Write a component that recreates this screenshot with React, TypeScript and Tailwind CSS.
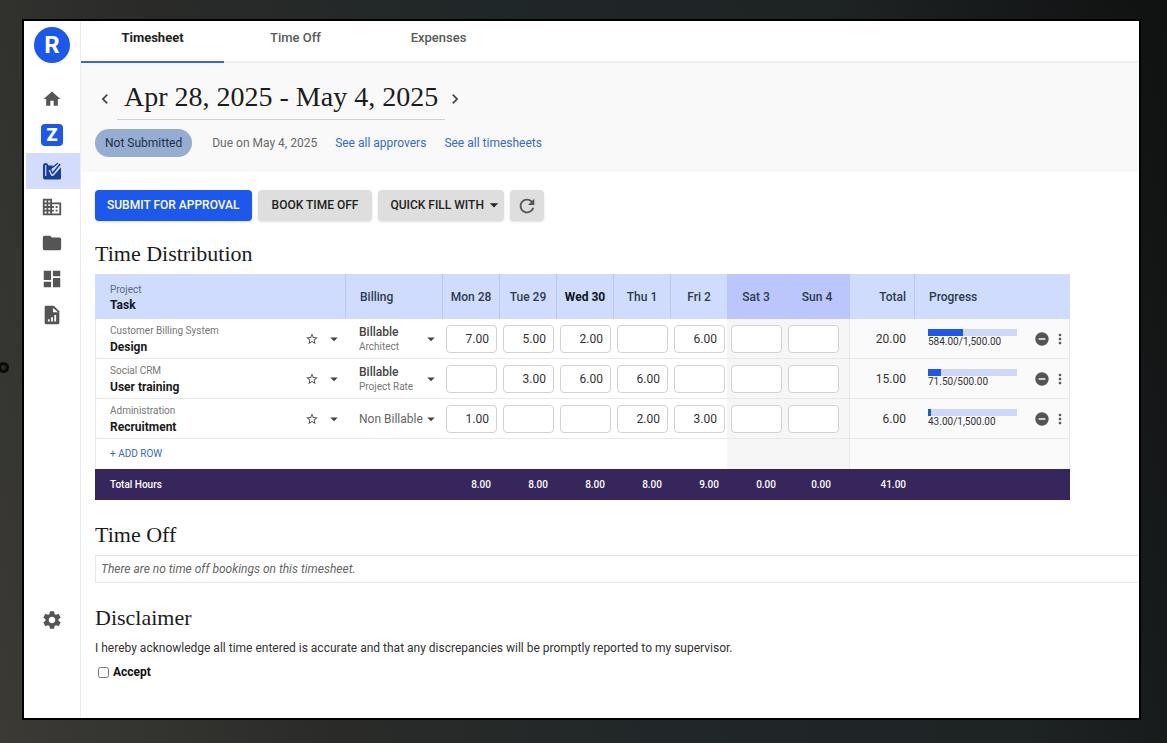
import { useState } from 'react';
import {
  MdArrowDropDown,
  MdChevronLeft,
  MdChevronRight,
  MdDashboard,
  MdDomain,
  MdFolder,
  MdHome,
  MdMoreVert,
  MdRefresh,
  MdRemoveCircle,
  MdSettings,
  MdStarBorder,
} from 'react-icons/md';

interface Day {
  label: string;
  weekend?: boolean;
  today?: boolean;
  total: string;
}

interface TimesheetRow {
  project: string;
  task: string;
  billing: string;
  rate?: string;
  hours: string[];
  total: string;
  used: number;
  budget: number;
}

const days: Day[] = [
  { label: 'Mon 28', total: '8.00' },
  { label: 'Tue 29', total: '8.00' },
  { label: 'Wed 30', total: '8.00', today: true },
  { label: 'Thu 1', total: '8.00' },
  { label: 'Fri 2', total: '9.00' },
  { label: 'Sat 3', total: '0.00', weekend: true },
  { label: 'Sun 4', total: '0.00', weekend: true },
];

const initialRows: TimesheetRow[] = [
  {
    project: 'Customer Billing System',
    task: 'Design',
    billing: 'Billable',
    rate: 'Architect',
    hours: ['7.00', '5.00', '2.00', '', '6.00', '', ''],
    total: '20.00',
    used: 584,
    budget: 1500,
  },
  {
    project: 'Social CRM',
    task: 'User training',
    billing: 'Billable',
    rate: 'Project Rate',
    hours: ['', '3.00', '6.00', '6.00', '', '', ''],
    total: '15.00',
    used: 71.5,
    budget: 500,
  },
  {
    project: 'Administration',
    task: 'Recruitment',
    billing: 'Non Billable',
    hours: ['1.00', '', '', '2.00', '3.00', '', ''],
    total: '6.00',
    used: 43,
    budget: 1500,
  },
];

const formatHours = (value: number) =>
  value.toLocaleString('en-US', { minimumFractionDigits: 2, maximumFractionDigits: 2 });

const TimesheetIcon = () => (
  <svg viewBox="0 0 20 20" className="size-5" fill="none">
    <path d="M1 5Q1 2 3.500 2T6.500 4.500H11L9 10L19 6V17Q19 18.500 17.500 18.500H3Q1 18.500 1 16.500Z" fill="#173d9e" />
    <path d="M3.700 4.500V14.500" stroke="#d3ddfb" strokeWidth="1.200" strokeLinecap="round" />
    <path d="M8.500 8.500L10.500 13L18.500 4" stroke="#d3ddfb" strokeWidth="4" strokeLinejoin="round" />
    <path d="M8.500 8L10.500 12.500L17.800 3.500" stroke="#173d9e" strokeWidth="1.500" strokeLinecap="round" strokeLinejoin="round" />
    <path d="M10.500 6.500L15.500 2.500" stroke="#173d9e" strokeWidth="1.500" strokeLinecap="round" />
  </svg>
);

const ReportIcon = () => (
  <svg viewBox="0 0 24 24" className="size-[22px]" fill="currentColor">
    <path d="M14 2H5.500C4.500 2 4 2.700 4 3.500v17c0 .8.500 1.500 1.500 1.500h13c.9 0 1.500-.7 1.500-1.500V8z" />
    <path d="M13 4v5h5.500z" fill="#fff" />
    <path d="M7.500 16.500h2V19h-2zM11 14.500h2V19h-2zM14.500 12h2v7h-2z" fill="#fff" />
  </svg>
);

const Sidebar = () => (
  <nav className="flex w-[57px] shrink-0 flex-col items-center border-r border-[#ececee] text-[#555]" aria-label="Main">
    <a href="#" aria-label="Home page" className="mt-1.5 flex size-9 items-center justify-center rounded-full bg-[#1c58ee] text-2xl leading-6 font-bold text-white">
      R
    </a>
    <div className="mt-[18px] flex w-full flex-col">
      <a href="#" aria-label="Home" className="flex h-9 items-center justify-center">
        <MdHome className="size-5" />
      </a>
      <a href="#" aria-label="Assistant" className="flex h-9 items-center justify-center">
        <span className="flex size-[22px] items-center justify-center rounded-sm bg-[#1c58ee] text-lg font-black text-white">Z</span>
      </a>
      <a href="#" aria-label="Timesheets" className="ml-0.5 flex h-9 items-center justify-center bg-[#d3ddfb] pr-0.5">
        <TimesheetIcon />
      </a>
      <a href="#" aria-label="Clients" className="flex h-9 items-center justify-center">
        <MdDomain className="size-[22px]" />
      </a>
      <a href="#" aria-label="Projects" className="flex h-9 items-center justify-center">
        <MdFolder className="size-[22px]" />
      </a>
      <a href="#" aria-label="Dashboards" className="flex h-9 items-center justify-center">
        <MdDashboard className="size-[22px]" />
      </a>
      <a href="#" aria-label="Reports" className="flex h-9 items-center justify-center">
        <ReportIcon />
      </a>
    </div>
    <a href="#" aria-label="Settings" className="mt-auto mb-[87px]">
      <MdSettings className="size-[22px]" />
    </a>
  </nav>
);

const App = () => {
  const [rows, setRows] = useState(initialRows);
  const [accepted, setAccepted] = useState(false);

  const handleHoursChange = (rowIndex: number, dayIndex: number, value: string) => {
    setRows(
      rows.map((row, i) =>
        i === rowIndex ? { ...row, hours: row.hours.map((h, j) => (j === dayIndex ? value : h)) } : row
      )
    );
  };

  return (
    <div className="relative flex min-h-screen bg-[linear-gradient(75deg,#3b3a35_0%,#2a2b29_25%,#202728_50%,#1e2324_75%,#101111_100%)] pt-[21px] pr-7 pb-[25px] pl-6 font-[Roboto,sans-serif] text-xs text-[#333]">
      {/* camera dot on the bezel */}
      <span className="absolute top-[362px] -left-0.5 size-[11px] rounded-full border-3 border-[#0a0a0a] bg-[#2a2a28]" />

      <div className="flex min-w-0 flex-1 bg-white outline-2 outline-black">
        <Sidebar />

        <main className="min-w-0 flex-1">
          <div className="flex h-[42px] border-b-2 border-[#efefef] text-[13px] font-medium text-[#5a5a5a]" role="tablist">
            <button role="tab" aria-selected="true" className="-mb-0.5 w-[143px] border-b-2 border-[#3f66d8] pb-1.5 font-bold text-[#222]">Timesheet</button>
            <button role="tab" aria-selected="false" className="-mb-0.5 w-[143px] border-b-2 border-transparent pb-1.5">Time Off</button>
            <button role="tab" aria-selected="false" className="-mb-0.5 w-[143px] border-b-2 border-transparent pb-1.5">Expenses</button>
          </div>

          <header className="h-[109px] bg-[#f9f9f9] pt-3.5 pl-3.5">
            <div className="flex items-center">
              <button aria-label="Previous week" className="text-[#444]">
                <MdChevronLeft className="size-5" />
              </button>
              <h1 className="ml-0.5 h-[43px] border-b border-[#d0d0d0] px-[7px] font-['Liberation_Serif',serif] text-[28px] leading-10 whitespace-nowrap text-[#1c1c1c]">
                Apr 28, 2025 - May 4, 2025
              </h1>
              <button aria-label="Next week" className="text-[#444]">
                <MdChevronRight className="size-5" />
              </button>
            </div>
            <div className="mt-[9px] flex items-center text-[#6a6a6a]">
              <span className="rounded-full bg-[#94add0] px-2.5 py-1.5 text-[#1f3046]">Not Submitted</span>
              <span className="ml-5">Due on May 4, 2025</span>
              <a href="#" className="ml-[18px] text-[#376bc6]">See all approvers</a>
              <a href="#" className="ml-[18px] text-[#376bc6]">See all timesheets</a>
            </div>
          </header>

          <div className="pt-[18px] pl-3.5">
            <div className="flex gap-1.5 font-medium text-[#222]">
              <button className="h-[31px] rounded-sm bg-[#1c58ee] px-3 pb-0.5 text-white shadow-sm">SUBMIT FOR APPROVAL</button>
              <button className="h-[31px] rounded-sm bg-[#dedede] px-3.5 pb-0.5 shadow-sm">BOOK TIME OFF</button>
              <button className="flex h-[31px] items-center rounded-sm bg-[#dedede] pb-0.5 pl-3 shadow-sm">
                QUICK FILL WITH
                <MdArrowDropDown className="size-5" />
              </button>
              <button aria-label="Refresh" className="flex h-[31px] w-[34px] items-center justify-center rounded-sm bg-[#dedede] text-[#555] shadow-sm">
                <MdRefresh className="size-[22px]" />
              </button>
            </div>

            <h2 className="mt-[21px] font-['Liberation_Serif',serif] text-[22px] leading-6 text-[#1c1c1c]">Time Distribution</h2>

            <div className="mt-2 mr-[69px]">
              <table className="w-full table-fixed border-separate border-spacing-0 text-left">
                <colgroup>
                  <col />
                  <col className="w-[97px]" />
                  {days.map((day, i) => (
                    <col key={day.label} className={i === 6 ? 'w-[65px]' : 'w-[57px]'} />
                  ))}
                  <col className="w-[65px]" />
                  <col className="w-[156px]" />
                </colgroup>
                <thead>
                  <tr className="h-[45px] bg-[#cfdcfd] text-[#2d3a52]">
                    <th className="pl-[15px] font-normal">
                      <div className="text-[10px] leading-4 text-[#5c6a84]">Project</div>
                      <div className="leading-3.5 font-bold text-[#111827]">Task</div>
                    </th>
                    <th className="border-l border-[#b9c8ee] pl-3.5 font-medium">Billing</th>
                    {days.map((day) => (
                      <th
                        key={day.label}
                        className={`border-l border-[#b9c8ee] text-center ${day.weekend ? 'bg-[#bac6fc]' : ''} ${day.today ? 'font-bold text-[#0c1320]' : 'font-medium'}`}
                      >
                        {day.label}
                      </th>
                    ))}
                    <th className="border-l border-[#b9c8ee] pr-2 text-right font-medium">Total</th>
                    <th className="border-l border-[#b9c8ee] pl-3.5 font-medium">Progress</th>
                  </tr>
                </thead>
                <tbody>
                  {rows.map((row, rowIndex) => (
                    <tr key={row.task} className="h-10 *:border-b *:border-[#e8e8e8]">
                      <td className="border-l pl-3.5">
                        <div className="flex items-center">
                          <div className="min-w-0 flex-1">
                            <div className="text-[10px] leading-4 text-[#777]">{row.project}</div>
                            <div className="leading-4 font-bold text-[#1a1a1a]">{row.task}</div>
                          </div>
                          <button aria-label={`Favorite ${row.task}`} className="text-[#555]">
                            <MdStarBorder className="size-3.5" />
                          </button>
                          <button aria-label={`Change task ${row.task}`} className="mr-0.5 ml-1.5 text-[#444]">
                            <MdArrowDropDown className="size-[18px]" />
                          </button>
                        </div>
                      </td>
                      <td className="pl-3.5">
                        <button className="flex w-full items-center text-left">
                          <span className="min-w-0 flex-1">
                            {row.rate ? (
                              <>
                                <span className="block leading-4 font-medium text-[#444]">{row.billing}</span>
                                <span className="block text-[10px] leading-3.5 text-[#777]">{row.rate}</span>
                              </>
                            ) : (
                              <span className="block whitespace-nowrap text-[#666]">{row.billing}</span>
                            )}
                          </span>
                          <MdArrowDropDown className="mr-0.5 size-[18px] text-[#444]" />
                        </button>
                      </td>
                      {row.hours.map((value, dayIndex) => (
                        <td key={days[dayIndex].label} className={`pl-1 ${days[dayIndex].weekend ? 'bg-[#f6f6f6]' : ''}`}>
                          <input
                            aria-label={`${row.task} ${days[dayIndex].label}`}
                            value={value}
                            onChange={(e) => handleHoursChange(rowIndex, dayIndex, e.target.value)}
                            className="block h-7 w-[51px] rounded-sm border border-[#d2d2d2] bg-white pr-[7px] text-right text-[#333]"
                          />
                        </td>
                      ))}
                      <td className="border-l bg-[#fafafa] pr-2 text-right">{row.total}</td>
                      <td className="border-r bg-[#fafafa] pl-3.5">
                        <div className="flex items-center">
                          <div className="w-[89px]">
                            <div className="h-[7px] bg-[#cdd8fb]">
                              <div className="h-full bg-[#1c58ee]" style={{ width: `${(row.used / row.budget) * 100}%` }} />
                            </div>
                            <div className="text-[10px] leading-3 text-[#333]">
                              {formatHours(row.used)}/{formatHours(row.budget)}
                            </div>
                          </div>
                          <button aria-label={`Remove ${row.task}`} className="ml-[17px] text-[#555]">
                            <MdRemoveCircle className="size-4" />
                          </button>
                          <button aria-label={`More options for ${row.task}`} className="ml-0.5 text-[#555]">
                            <MdMoreVert className="size-4" />
                          </button>
                        </div>
                      </td>
                    </tr>
                  ))}
                  <tr className="h-[30px] *:border-[#e8e8e8]">
                    <td colSpan={7} className="border-l pl-3.5">
                      <button className="block text-[10px] text-[#376bc6]">+ ADD ROW</button>
                    </td>
                    <td colSpan={2} className="bg-[#f6f6f6]" />
                    <td className="border-l bg-[#fafafa]" />
                    <td className="border-r bg-[#fafafa]" />
                  </tr>
                </tbody>
                <tfoot>
                  <tr className="h-[31px] bg-[#37265c] text-[10px] text-white">
                    <th colSpan={2} className="pl-[15px] font-medium">Total Hours</th>
                    {days.map((day, i) => (
                      <td key={day.label} className={`text-right font-medium ${i === 6 ? 'pr-[18px]' : 'pr-2'}`}>
                        {day.total}
                      </td>
                    ))}
                    <td className="pr-2 text-right font-medium">41.00</td>
                    <td />
                  </tr>
                </tfoot>
              </table>
            </div>

            <h2 className="mt-[23px] font-['Liberation_Serif',serif] text-[22px] leading-6 text-[#1c1c1c]">Time Off</h2>
            <p className="mt-2 border border-r-0 border-[#e8e8e8] px-[5px] leading-[26px] text-[#666] italic">
              There are no time off bookings on this timesheet.
            </p>

            <h2 className="mt-[23px] font-['Liberation_Serif',serif] text-[22px] leading-6 text-[#1c1c1c]">Disclaimer</h2>
            <p className="mt-1.5 leading-6">
              I hereby acknowledge all time entered is accurate and that any discrepancies will be promptly reported to my supervisor.
            </p>
            <label className="flex h-6 w-fit items-center gap-1 pl-[3px] font-bold text-[#111]">
              <input
                type="checkbox"
                checked={accepted}
                onChange={(e) => setAccepted(e.target.checked)}
                className="size-[11px]"
              />
              Accept
            </label>
          </div>
        </main>
      </div>
    </div>
  );
};

export default App;
